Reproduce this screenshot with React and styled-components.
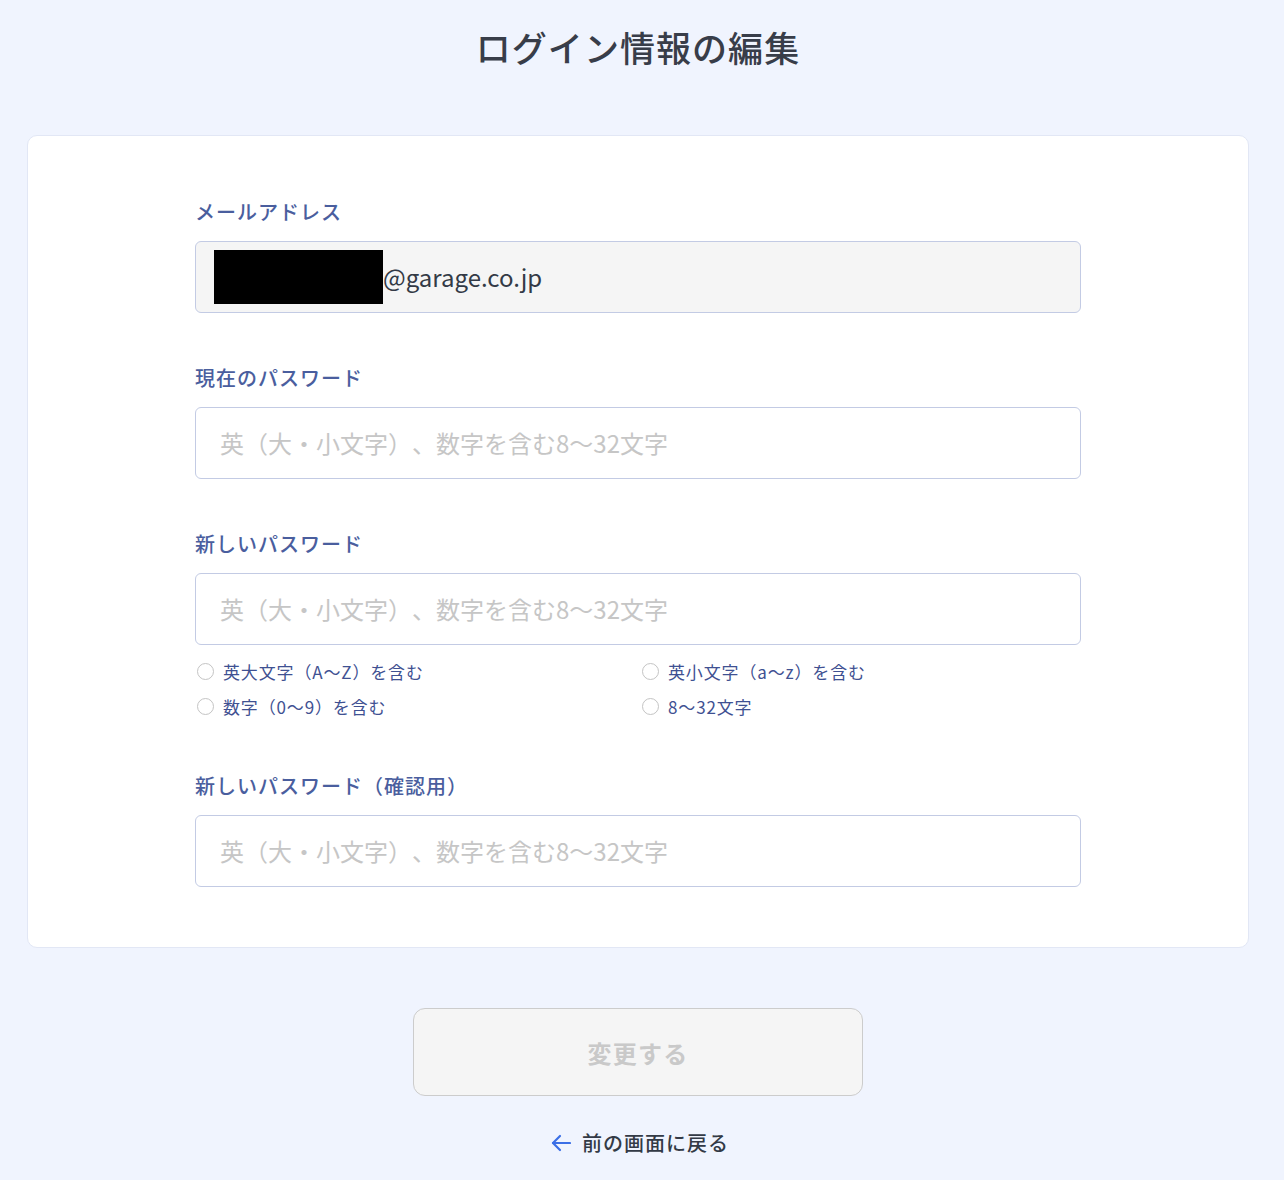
import React from "react";
import styled, { createGlobalStyle } from "styled-components";

const Global = createGlobalStyle`
  html, body { margin: 0; padding: 0; background: #f0f4fe; }
  body {
    font-family: "Noto Sans CJK JP", "Noto Sans", sans-serif;
    color: #333a46;
  }
  * { box-sizing: border-box; }
`;

const Page = styled.div`
  min-height: 1180px;
  padding: 20px 35px 22px 27px;
  display: flex;
  flex-direction: column;
  align-items: center;
`;

const Title = styled.h1`
  margin: 0;
  font-size: 35px;
  line-height: 54px;
  font-weight: 500;
  letter-spacing: 0.03em;
  color: #383d49;
`;

const Card = styled.section`
  align-self: stretch;
  margin-top: 61px;
  background: #ffffff;
  border: 1px solid #e2e7f5;
  border-radius: 10px;
  padding: 61px 167px 60px;
`;

const Form = styled.div`
  display: flex;
  flex-direction: column;
  gap: 50px;
`;

const Field = styled.div`
  display: flex;
  flex-direction: column;
`;

const Label = styled.label`
  font-size: 20px;
  line-height: 30px;
  font-weight: 500;
  letter-spacing: 0.05em;
  color: #4a5e9e;
  margin-bottom: 14px;
`;

const InputBox = styled.div`
  height: 72px;
  border: 1px solid #c3cbe4;
  border-radius: 6px;
  background: ${(p) => (p.$readonly ? "#f5f5f5" : "#ffffff")};
  display: flex;
  align-items: center;
  padding-left: ${(p) => (p.$readonly ? "18px" : "24px")};
  padding-bottom: 1px;
  font-size: 24px;
`;

const Redacted = styled.span`
  display: inline-block;
  width: 169px;
  height: 54px;
  background: #000;
  margin-top: 1px;
`;

const Value = styled.span`
  color: #333a46;
`;

const Placeholder = styled.span`
  color: #c6c6c6;
  text-spacing-trim: space-all;
  letter-spacing: 0;
`;

const Checks = styled.div`
  display: grid;
  grid-template-columns: 1fr 1fr;
  column-gap: 6px;
  row-gap: 10px;
  margin-top: 14px;
  margin-bottom: 2px;
  padding-left: 2px;
`;

const Check = styled.div`
  display: flex;
  align-items: center;
  gap: 9px;
  font-size: 17px;
  line-height: 25px;
  letter-spacing: 0.05em;
  color: #3f5192;
`;

const Circle = styled.span`
  width: 17px;
  height: 17px;
  border-radius: 50%;
  border: 1px solid #c4c4c4;
  background: #fff;
  flex: none;
`;

const Button = styled.button`
  margin-top: 60px;
  width: 450px;
  height: 88px;
  border: 1px solid #cccccc;
  border-radius: 12px;
  background: #f5f5f5;
  color: #c9c9c9;
  font-family: "Noto Sans CJK JP", "Noto Sans", sans-serif;
  font-size: 24px;
  font-weight: 700;
  letter-spacing: 0.05em;
`;

const BackLink = styled.a`
  margin-top: 32px;
  margin-left: 4px;
  display: flex;
  align-items: center;
  gap: 11px;
  font-size: 20px;
  line-height: 30px;
  font-weight: 500;
  letter-spacing: 0.05em;
  color: #333a46;
  text-decoration: none;
`;

const PH = "英（大・小文字）、数字を含む8〜32文字";

function PasswordField({ label, children }) {
  return (
    <Field>
      <Label>{label}</Label>
      <InputBox>
        <Placeholder>{PH}</Placeholder>
      </InputBox>
      {children}
    </Field>
  );
}

export default function App() {
  const rules = [
    "英大文字（A〜Z）を含む",
    "英小文字（a〜z）を含む",
    "数字（0〜9）を含む",
    "8〜32文字",
  ];
  return (
    <>
      <Global />
      <Page>
        <Title>ログイン情報の編集</Title>
        <Card>
          <Form>
            <Field>
              <Label>メールアドレス</Label>
              <InputBox $readonly>
                <Redacted />
                <Value>@garage.co.jp</Value>
              </InputBox>
            </Field>
            <PasswordField label="現在のパスワード" />
            <PasswordField label="新しいパスワード">
              <Checks>
                {rules.map((r) => (
                  <Check key={r}>
                    <Circle />
                    {r}
                  </Check>
                ))}
              </Checks>
            </PasswordField>
            <PasswordField label="新しいパスワード（確認用）" />
          </Form>
        </Card>
        <Button disabled>変更する</Button>
        <BackLink href="#">
          <svg width="20" height="18" viewBox="0 0 20 18" fill="none" stroke="#3b6fe6" strokeWidth="2.2" strokeLinecap="round" strokeLinejoin="round">
            <path d="M2 9H19" />
            <path d="M9 2L2 9L9 16" />
          </svg>
          前の画面に戻る
        </BackLink>
      </Page>
    </>
  );
}
